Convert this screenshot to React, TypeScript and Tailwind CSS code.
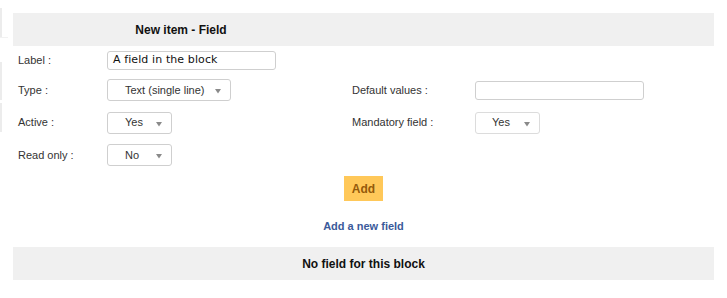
import React from "react";

function Select({ value, width, textPad, light }: { value: string; width: string; textPad: string; light?: boolean }) {
  return (
    <div
      className={`relative flex h-[22px] items-center rounded-[3px] border bg-white ${light ? "border-[#dcdcdc]" : "border-[#cfcfcf]"} ${width}`}
    >
      <span className={`text-[11px] text-[#333] ${textPad}`}>{value}</span>
      <svg className="absolute right-[9px] top-[9px]" width="6" height="5" viewBox="0 0 6 5">
        <path d="M0 0 L6 0 L3 4.5 Z" fill="#8a8a8a" />
      </svg>
    </div>
  );
}

export default function App() {
  const font = { fontFamily: '"Liberation Sans", Arial, sans-serif' };
  return (
    <div className="relative h-[298px] w-[727px] bg-white" style={font}>
      {/* faint left edge decorations */}
      <div className="absolute left-0 top-[8px] h-[29px] w-[2px] bg-[#ececec]" />
      <div className="absolute left-0 top-[37px] h-px w-[8px] bg-[#f2f2f2]" />
      <div className="absolute left-0 top-[62px] h-[38px] w-[2px] bg-[#ececec]" />
      <div className="absolute left-0 top-[103px] h-[29px] w-[2px] bg-[#ececec]" />

      <div className="flex flex-col pl-[13px] pr-[13px] pt-[13px]">
        {/* header */}
        <div className="flex h-[33px] items-center bg-[#f0f0f0]">
          <div className="w-[336px] text-center text-[12px] font-bold text-[#111]">New item - Field</div>
        </div>

        {/* Label row */}
        <div className="flex h-[28px] items-center">
          <div className="w-[94px] pl-[5px] text-[11px] text-[#333]">Label :</div>
          <div className="flex h-[19px] w-[169px] items-center rounded-[3px] border border-[#cfcfcf] bg-white pl-[5px]">
            <span className="text-[11px] tracking-[0.1px] text-[#111]" style={{ fontFamily: '"DejaVu Sans", sans-serif' }}>
              A field in the block
            </span>
          </div>
        </div>

        {/* Type row */}
        <div className="flex h-[32px] items-center">
          <div className="w-[94px] pl-[5px] text-[11px] text-[#333]">Type :</div>
          <div className="w-[238px]">
            <Select value="Text (single line)" width="w-[124px]" textPad="pl-[17px]" />
          </div>
          <div className="w-[130px] pl-[7px] text-[11px] text-[#333]">Default values :</div>
          <div className="h-[19px] w-[169px] rounded-[3px] border border-[#cfcfcf] bg-white" />
        </div>

        {/* Active row */}
        <div className="flex h-[33px] items-center">
          <div className="w-[94px] pl-[5px] text-[11px] text-[#333]">Active :</div>
          <div className="w-[238px]">
            <Select value="Yes" width="w-[65px]" textPad="pl-[17px]" />
          </div>
          <div className="w-[130px] pl-[7px] text-[11px] text-[#333]">Mandatory field :</div>
          <Select value="Yes" width="w-[65px]" textPad="pl-[16px]" light />
        </div>

        {/* Read only row */}
        <div className="flex h-[32px] items-center">
          <div className="w-[94px] pl-[5px] text-[11px] text-[#333]">Read only :</div>
          <Select value="No" width="w-[65px]" textPad="pl-[17px]" />
        </div>

        {/* Add button */}
        <div className="flex justify-center pt-[5px]">
          <button className="flex h-[25px] w-[39px] items-center justify-center bg-[#ffc859] text-[12px] font-bold text-[#94590a]">
            Add
          </button>
        </div>

        {/* Add a new field link */}
        <div className="flex h-[46px] items-start justify-center pt-[19px]">
          <span className="text-[11px] font-bold leading-[13px] text-[#3b5a9a]">Add a new field</span>
        </div>

        {/* footer */}
        <div className="flex h-[33px] items-center justify-center bg-[#f0f0f0]">
          <span className="text-[12px] font-bold text-[#111]">No field for this block</span>
        </div>
      </div>
    </div>
  );
}
